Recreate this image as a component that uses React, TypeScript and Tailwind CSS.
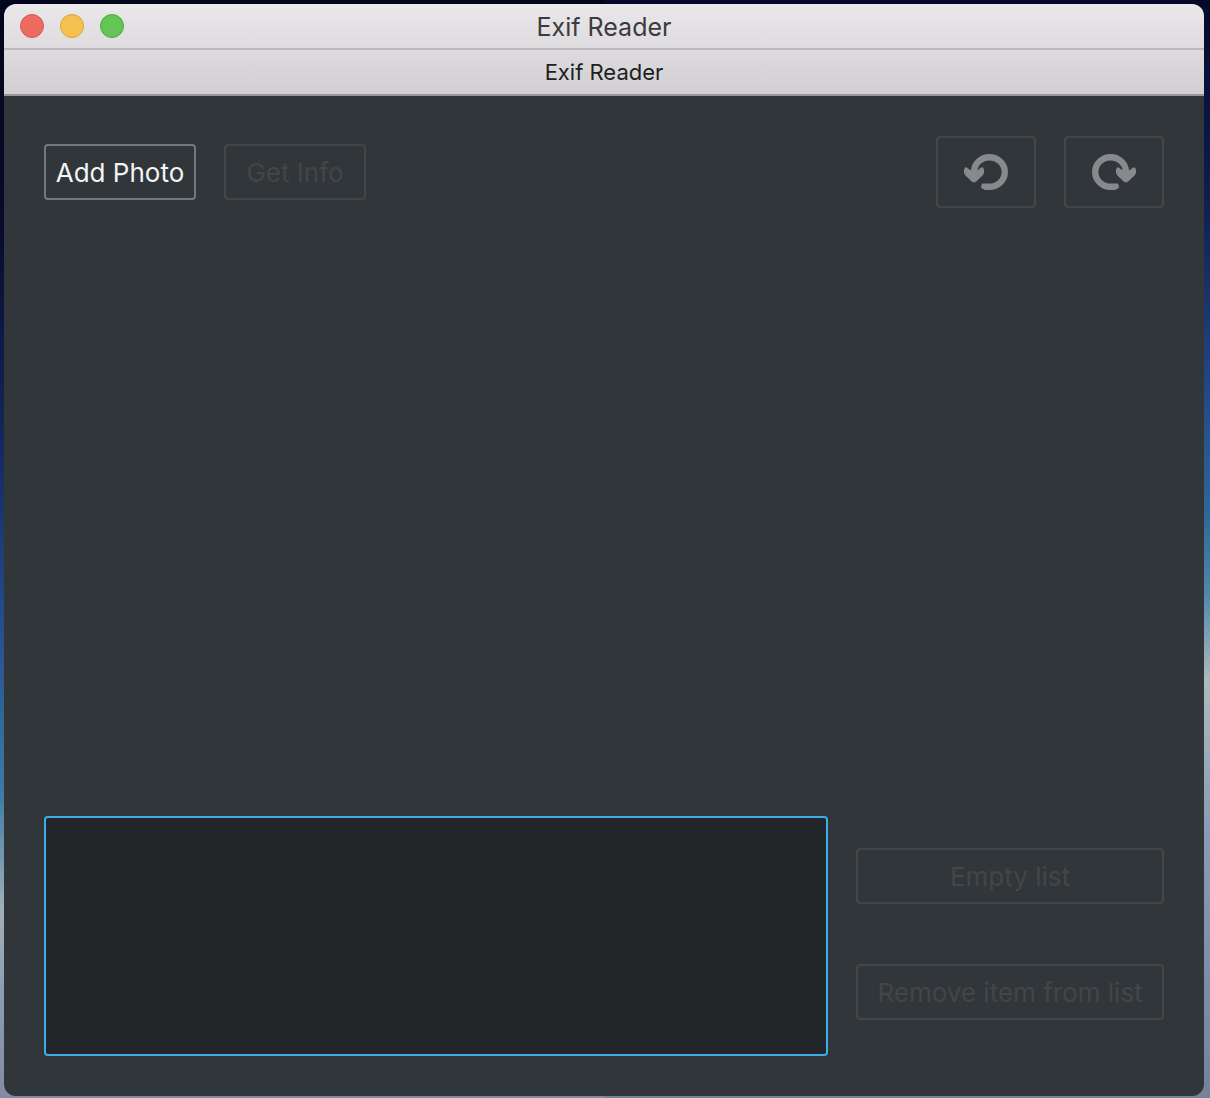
import type { ReactNode } from "react";

function TrafficLight({ label, className }: { label: string; className: string }) {
  return <button type="button" aria-label={label} className={`size-6 rounded-full border ${className}`} />;
}

function RotateIcon({ flipped = false }: { flipped?: boolean }) {
  return (
    <svg
      viewBox="0 0 44 36"
      aria-hidden="true"
      className={`h-9 w-11 text-[#87898d] ${flipped ? "-scale-x-100" : ""}`}
    >
      <path d="M10 20 V18 A15.4 15 0 0 1 25.4 3.2 A15.4 14.8 0 0 1 25.4 32.8 Q23 32.9 20.6 32.6" fill="none" stroke="currentColor" strokeWidth="6.4" />
      <path d="M21 29.5 L18.2 29.6 L17 32 L17.4 34.2 L21 35.7 Z" fill="currentColor" />
      <path d="M0.8 13.4 L3 13.4 L6 16 H14 L17 13.4 L19.2 13.4 L20 16 V19 L18.6 21.6 L11.4 28.2 H8.6 L1.4 21.6 L0 19 V16 Z" fill="currentColor" />
    </svg>
  );
}

function ActionButton({ children, disabled = false, className = "" }: { children: ReactNode; disabled?: boolean; className?: string }) {
  return (
    <button
      type="button"
      disabled={disabled}
      className={`h-14 rounded border-2 pt-0.5 text-[26px] leading-8 whitespace-nowrap ${
        disabled ? "border-[#454545] text-[#454545]" : "border-[#76797c] text-[#f3f4f5]"
      } ${className}`}
    >
      {children}
    </button>
  );
}

function RotateButton({ label, flipped }: { label: string; flipped?: boolean }) {
  return (
    <button
      type="button"
      disabled
      aria-label={label}
      className="flex h-18 w-25 items-center justify-center rounded border-2 border-[#454545]"
    >
      <RotateIcon flipped={flipped} />
    </button>
  );
}

export default function App() {
  return (
    <div className="flex min-h-screen flex-col bg-[#05082a] bg-[linear-gradient(to_bottom,#03051c_0%,#060b2c_20%,#14265c_40%,#244f8c_57%,#3c7aa6_72%,#a3b0b9_83%,#8b9cb0_91%,#828ba3_100%),linear-gradient(to_bottom,#05082a_0%,#101d4f_18%,#1f3f7c_32%,#2f679a_47%,#5088ab_54%,#b0b9bd_62%,#8a9cb5_75%,#75829c_100%)] bg-[length:50%_100%,100%_100%] bg-no-repeat pt-1 pr-1.5 pb-0.5 pl-1 font-['Inter',sans-serif]">
      <div className="flex flex-1 flex-col overflow-hidden rounded-xl bg-[#31363a]">
        <header className="bg-linear-to-b from-[#eae8eb] to-[#d0ced1]">
          <div className="grid h-[46px] grid-cols-[1fr_auto_1fr] items-center border-b-2 border-[#bcbabd] px-4">
            <div className="flex gap-4">
              <TrafficLight label="Close" className="border-[#d9564e] bg-[#ed6b60]" />
              <TrafficLight label="Minimize" className="border-[#d9a13f] bg-[#f5c250]" />
              <TrafficLight label="Zoom" className="border-[#4fa73f] bg-[#62c655]" />
            </div>
            <h1 className="pt-0.5 text-[25px] leading-8 text-[#3c3a3d]">Exif Reader</h1>
          </div>
          <div className="flex h-[46px] items-center justify-center border-b-2 border-[#99979b] text-[22px] leading-7 text-[#201e21]">
            Exif Reader
          </div>
        </header>
        <main className="flex flex-1 flex-col justify-between p-10">
          <div className="flex items-center gap-7">
            <ActionButton className="w-38">Add Photo</ActionButton>
            <ActionButton disabled className="w-[142px]">
              Get Info
            </ActionButton>
            <div className="ml-auto flex gap-7">
              <RotateButton label="Rotate left" />
              <RotateButton label="Rotate right" flipped />
            </div>
          </div>
          <div className="flex gap-7">
            <ul role="listbox" aria-label="Photos" tabIndex={0} className="h-60 flex-1 rounded border-2 border-[#3daee9] bg-[#232629]" />
            <div className="flex w-77 flex-col gap-15 pt-8">
              <ActionButton disabled>Empty list</ActionButton>
              <ActionButton disabled>Remove item from list</ActionButton>
            </div>
          </div>
        </main>
      </div>
    </div>
  );
}
